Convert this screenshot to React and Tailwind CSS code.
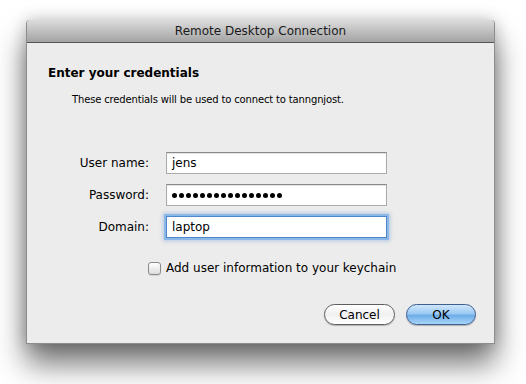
import React from "react";

const font = { fontFamily: '"DejaVu Sans", "Liberation Sans", sans-serif' };

function Field({ label, children, focused }) {
  const box = focused
    ? "border-[#4f86c9] shadow-[0_0_0_2px_#8cb8e8,0_0_4px_3px_rgba(90,143,207,0.4)]"
    : "border-[#ababab] border-t-[#8a8a8a] shadow-[inset_0_1px_1px_rgba(0,0,0,0.12)]";
  return (
    <div className="flex items-center h-[22px]">
      <div className="w-[122px] text-right text-[12px] text-black leading-none">{label}</div>
      <div className="w-[17px]" />
      <div className={"w-[221px] h-[22px] bg-white flex items-center pl-[5px] text-[12px] text-black border " + box}>
        {children}
      </div>
    </div>
  );
}

export default function App() {
  return (
    <div className="w-[526px] h-[384px] bg-white pl-[26px] pt-[20px]" style={font}>
      <div className="w-[469px] h-[324px] flex flex-col bg-[#ececec] border-x border-b border-[#8e8e8e] rounded-t-[4px] shadow-[0_20px_30px_rgba(0,0,0,0.55),0_0_16px_rgba(0,0,0,0.22)]">
        <div className="h-[23px] rounded-t-[4px] bg-gradient-to-b from-[#dcdcdc] to-[#a4a4a4] border-b border-[#555555] flex items-center justify-center text-[12px] text-[#1a1a1a]">
          Remote Desktop Connection
        </div>
        <div className="pl-[21px] mt-[22px] h-[16px] flex items-center text-[12px] font-bold text-black">
          Enter your credentials
        </div>
        <div className="pl-[45px] mt-[11px] h-[14px] flex items-center text-[10px] tracking-[-0.15px] text-black">
          These credentials will be used to connect to tanngnjost.
        </div>
        <div className="mt-[46px] flex flex-col gap-[10px]">
          <Field label="User name:">jens</Field>
          <Field label="Password:">
            <div className="flex gap-[2px]">
              {Array.from({ length: 16 }).map((_, i) => (
                <div key={i} className="w-[5px] h-[5px] rounded-full bg-black" />
              ))}
            </div>
          </Field>
          <Field label="Domain:" focused>
            laptop
          </Field>
        </div>
        <div className="mt-[22px] pl-[121px] h-[16px] flex items-center">
          <div className="w-[13px] h-[13px] rounded-[3px] border border-[#8a8a8a] bg-gradient-to-b from-white to-[#dcdcdc] shadow-[0_1px_1px_rgba(0,0,0,0.1)]" />
          <div className="ml-[5px] text-[12px] text-black">Add user information to your keychain</div>
        </div>
        <div className="mt-[28px] flex justify-end pr-[18px] gap-[11px]">
          <div className="w-[71px] h-[21px] rounded-full border border-[#5e5e5e] bg-gradient-to-b from-[#ffffff] via-[#f0f0f0] to-[#ffffff] shadow-[0_1px_1px_rgba(0,0,0,0.25)] flex items-center justify-center text-[12px] text-black">
            Cancel
          </div>
          <div className="w-[70px] h-[21px] rounded-full border border-[#3f5f8f] bg-[linear-gradient(to_bottom,#cfe6fb_0%,#9ccaf2_45%,#6eaee8_55%,#a8d4fa_100%)] shadow-[0_1px_1px_rgba(0,0,0,0.25)] flex items-center justify-center text-[12px] text-black">
            OK
          </div>
        </div>
      </div>
    </div>
  );
}
